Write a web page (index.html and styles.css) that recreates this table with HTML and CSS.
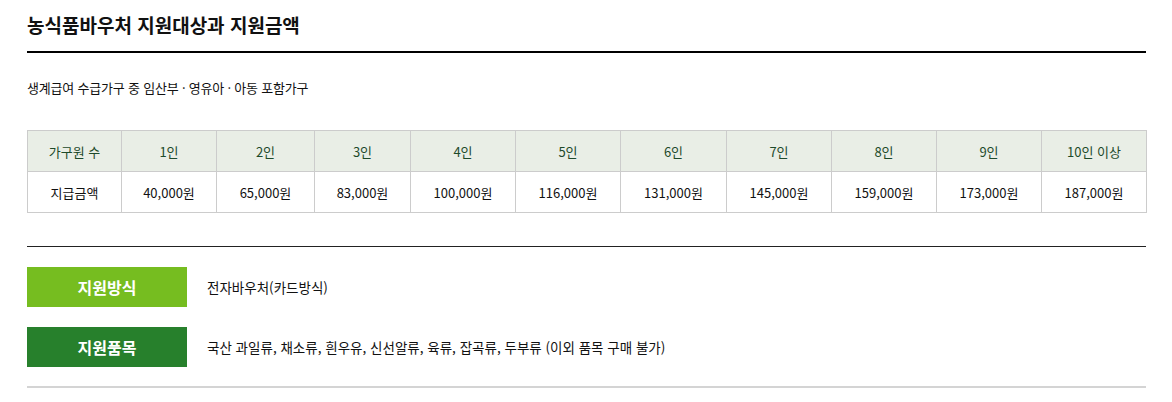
FILE: index.html
```html
<!DOCTYPE html>
<html lang="ko">
<head>
  <meta charset="UTF-8" />
  <title>농식품바우처 지원대상과 지원금액</title>
  <link rel="stylesheet" href="styles.css">
</head>
<body>
  <div class="wrap">
    <h1>농식품바우처 지원대상과 지원금액</h1>
    <p class="target">생계급여 수급가구 중 임산부 · 영유아 · 아동 포함가구</p>

    <table class="amount">
      <colgroup>
        <col width="94"><col width="95"><col width="98"><col width="96"><col width="105"><col width="105">
        <col width="106"><col width="105"><col width="105"><col width="105"><col width="105">
      </colgroup>
      <thead>
        <tr>
          <th>가구원 수</th>
          <th>1인</th>
          <th>2인</th>
          <th>3인</th>
          <th>4인</th>
          <th>5인</th>
          <th>6인</th>
          <th>7인</th>
          <th>8인</th>
          <th>9인</th>
          <th>10인 이상</th>
        </tr>
      </thead>
      <tbody>
        <tr>
          <td>지급금액</td>
          <td>40,000원</td>
          <td>65,000원</td>
          <td>83,000원</td>
          <td>100,000원</td>
          <td>116,000원</td>
          <td>131,000원</td>
          <td>145,000원</td>
          <td>159,000원</td>
          <td>173,000원</td>
          <td>187,000원</td>
        </tr>
      </tbody>
    </table>

    <div class="info">
      <div class="info-row">
        <span class="label label-light">지원방식</span>
        <span class="desc">전자바우처(카드방식)</span>
      </div>
      <div class="info-row">
        <span class="label label-dark">지원품목</span>
        <span class="desc">국산 과일류, 채소류, 흰우유, 신선알류, 육류, 잡곡류, 두부류 (이외 품목 구매 불가)</span>
      </div>
    </div>
  </div>
</body>
</html>
```

FILE: styles.css
```css
body {
  margin: 0;
  font-family: "Noto Sans CJK KR", "Noto Sans", sans-serif;
  color: #111;
  background: #fff;
}
.wrap {
  width: 1119px;
  margin-left: 27px;
}
h1 {
  margin: 10px 0 0;
  padding-bottom: 12px;
  font-size: 19px;
  line-height: 29px;
  font-weight: bold;
  border-bottom: 2px solid #000;
}
.target {
  margin: 25px 0 0;
  font-size: 13px;
  line-height: 19px;
  letter-spacing: -0.2px;
}
.amount {
  margin-top: 33px;
  width: 100%;
  border-collapse: collapse;
  table-layout: fixed;
  font-size: 13px;
}
.amount th, .amount td {
  height: 40px;
  padding: 0;
  border: 1px solid #ccc;
  text-align: center;
}
.amount th {
  background: #e9eee6;
  color: #1d4a2a;
  font-weight: normal;
}
.amount td {
  color: #111;
}
.info {
  margin-top: 33px;
  border-top: 1px solid #222;
  border-bottom: 2px solid #d4d4d4;
  padding: 20px 0 19px;
  display: flex;
  flex-direction: column;
  gap: 20px;
}
.info-row {
  display: flex;
  align-items: center;
}
.label {
  width: 160px;
  height: 40px;
  display: flex;
  align-items: center;
  justify-content: center;
  color: #fff;
  font-size: 16px;
  font-weight: bold;
}
.label-light {
  background: #76bd20;
}
.label-dark {
  background: #27802c;
}
.desc {
  margin-left: 20px;
  font-size: 13.5px;
}
```
